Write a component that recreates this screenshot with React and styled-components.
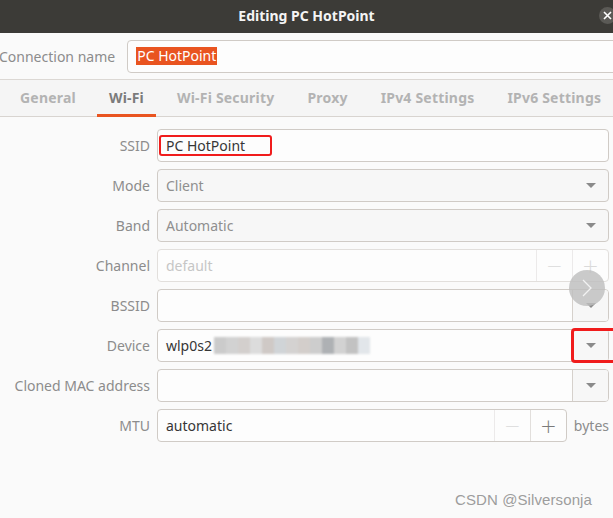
import React from 'react';
import styled, { createGlobalStyle, css } from 'styled-components';

const GlobalStyle = createGlobalStyle`
  html, body {
    margin: 0;
    padding: 0;
    background: #fafafa;
  }
  body {
    font-family: 'Noto Sans', 'Open Sans', sans-serif;
    font-size: 14px;
  }
`;

const Window = styled.div`
  position: relative;
  width: 613px;
  height: 518px;
  overflow: hidden;
  display: flex;
  flex-direction: column;
  background: #fafafa;
`;

const TitleBar = styled.div`
  height: 33px;
  flex-shrink: 0;
  background: #3c3b37;
  display: grid;
  grid-template-columns: 1fr auto 1fr;
  align-items: center;
`;

const Title = styled.div`
  grid-column: 2;
  color: #f4f4f4;
  font-weight: 700;
  font-size: 14px;
  margin-top: -2px;
`;

const CloseButton = styled.div`
  justify-self: end;
  margin-right: -3px;
  margin-top: -2px;
  width: 17px;
  height: 17px;
  border-radius: 50%;
  background: #5b5a56;
  display: flex;
  align-items: center;
  justify-content: center;
`;

const NameRow = styled.div`
  height: 46px;
  flex-shrink: 0;
  display: flex;
  align-items: center;
  gap: 12px;
  border-bottom: 1px solid #dcd8d4;
`;

const NameLabel = styled.div`
  color: #8c8c8c;
  margin-left: -1px;
  white-space: nowrap;
`;

const NameEntry = styled.div`
  flex: 1;
  height: 33px;
  margin-right: -12px;
  box-sizing: border-box;
  border: 1px solid #d0cbc6;
  border-radius: 4px;
  background: #fdfdfd;
  display: flex;
  align-items: center;
  padding-left: 8px;
`;

const Selected = styled.span`
  background: #e95420;
  color: #ffffff;
  line-height: 18px;
  padding: 0 1px;
`;

const TabBar = styled.div`
  height: 36px;
  flex-shrink: 0;
  display: flex;
  align-items: stretch;
  gap: 9px;
  padding-left: 8px;
  background: #f5f5f5;
  border-bottom: 1px solid #d8d4d0;
`;

const Tab = styled.div`
  padding: 0 12px;
  display: flex;
  align-items: center;
  font-weight: 700;
  font-size: 14px;
  letter-spacing: 0.2px;
  white-space: nowrap;
  color: #b3b3b3;
  margin-bottom: -1px;
  border-bottom: 3px solid transparent;
  padding-top: 1px;
  ${(p) =>
    p.$active &&
    css`
      color: #7b7b7b;
      border-bottom-color: #e95420;
    `}
`;

const Form = styled.div`
  display: grid;
  grid-template-columns: 150px 1fr;
  column-gap: 7px;
  row-gap: 7px;
  padding: 12px 4px 0 0;
`;

const FieldLabel = styled.div`
  color: #8c8c8c;
  text-align: right;
  align-self: center;
  white-space: nowrap;
`;

const FieldLine = styled.div`
  display: flex;
  align-items: center;
  gap: 7px;
`;

const Field = styled.div`
  flex: 1;
  height: 33px;
  box-sizing: border-box;
  border: 1px solid #d0cbc6;
  border-radius: 4px;
  background: ${(p) => (p.$combo ? '#f7f7f7' : '#fdfdfd')};
  display: flex;
  align-items: stretch;
  ${(p) =>
    p.$disabled &&
    css`
      border-color: #e2dfdc;
    `}
`;

const FieldText = styled.div`
  flex: 1;
  display: flex;
  align-items: center;
  padding-left: 8px;
  color: ${(p) => (p.$muted ? '#8f8f8f' : p.$placeholder ? '#c6c6c6' : '#363636')};
  white-space: nowrap;
  overflow: hidden;
`;

const Marked = styled.span`
  border: 2px solid #f01c1c;
  border-radius: 3px;
  margin-left: -7px;
  padding: 0 25px 0 5px;
  line-height: 17px;
`;

const SideButton = styled.div`
  position: relative;
  width: 35px;
  flex-shrink: 0;
  display: flex;
  align-items: center;
  justify-content: center;
  border-left: 1px solid ${(p) => (p.$plain ? 'transparent' : '#d6d1cc')};
  background: ${(p) => (p.$plain ? 'transparent' : '#f7f7f7')};
  border-radius: 0 3px 3px 0;
`;

const Arrow = styled.div`
  width: 0;
  height: 0;
  border-left: 5px solid transparent;
  border-right: 5px solid transparent;
  border-top: 5px solid #8a8a8a;
`;

const SpinButton = styled.div`
  width: 35px;
  flex-shrink: 0;
  display: flex;
  align-items: center;
  justify-content: center;
  border-left: 1px solid ${(p) => (p.$faded ? '#eceaea' : '#e2dfdc')};
  color: ${(p) => (p.$faded ? '#dadada' : '#7a7a7a')};
  font-size: 20px;
  font-weight: 300;
  font-family: 'DejaVu Sans', sans-serif;
`;

const Unit = styled.div`
  color: #8c8c8c;
`;

const Pixelated = styled.div`
  display: flex;
  height: 17px;
  margin-left: 2px;
  filter: blur(0.8px);
`;

const Pixel = styled.span`
  width: 12px;
  height: 100%;
`;

const RedFrame = styled.div`
  position: absolute;
  left: -2px;
  top: -2px;
  right: -9px;
  bottom: -2px;
  border: 3px solid #f01c1c;
  border-radius: 4px;
  pointer-events: none;
`;

const ScrollHint = styled.div`
  position: absolute;
  left: 569px;
  top: 270px;
  width: 36px;
  height: 36px;
  border-radius: 50%;
  background: rgba(190, 190, 190, 0.82);
  display: flex;
  align-items: center;
  justify-content: center;
`;

const Watermark = styled.div`
  position: absolute;
  left: 455px;
  top: 491px;
  font-family: 'Liberation Sans', Arial, sans-serif;
  font-size: 15px;
  color: #9d9d9d;
  letter-spacing: 0.1px;
`;

const blurColors = [
  '#cbcbcb', '#d2d2d2', '#d3cfcd', '#dcdcdc', '#cfc9c6', '#d0d4d7',
  '#d4d2d1', '#d3cecb', '#cdcdcd', '#aeb1b4', '#d2d2d2', '#c2c2c2', '#e2e6ea',
];

const tabs = ['General', 'Wi-Fi', 'Wi-Fi Security', 'Proxy', 'IPv4 Settings', 'IPv6 Settings'];

const DropDown = ({ plain, children }) => (
  <SideButton $plain={plain}>
    <Arrow />
    {children}
  </SideButton>
);

const App = () => {
  return (
    <Window>
      <GlobalStyle />
      <TitleBar>
        <Title>Editing PC HotPoint</Title>
        <CloseButton>
          <svg width="9" height="9" viewBox="0 0 9 9">
            <path d="M1 1 L8 8 M8 1 L1 8" stroke="#ffffff" strokeWidth="1.6" />
          </svg>
        </CloseButton>
      </TitleBar>

      <NameRow>
        <NameLabel>Connection name</NameLabel>
        <NameEntry>
          <Selected>PC HotPoint</Selected>
        </NameEntry>
      </NameRow>

      <TabBar>
        {tabs.map((t) => (
          <Tab key={t} $active={t === 'Wi-Fi'}>
            {t}
          </Tab>
        ))}
      </TabBar>

      <Form>
        <FieldLabel>SSID</FieldLabel>
        <Field>
          <FieldText>
            <Marked>PC HotPoint</Marked>
          </FieldText>
        </Field>

        <FieldLabel>Mode</FieldLabel>
        <Field $combo>
          <FieldText $muted>Client</FieldText>
          <DropDown plain />
        </Field>

        <FieldLabel>Band</FieldLabel>
        <Field $combo>
          <FieldText $muted>Automatic</FieldText>
          <DropDown plain />
        </Field>

        <FieldLabel>Channel</FieldLabel>
        <Field $disabled>
          <FieldText $placeholder>default</FieldText>
          <SpinButton $faded>−</SpinButton>
          <SpinButton $faded>+</SpinButton>
        </Field>

        <FieldLabel>BSSID</FieldLabel>
        <Field>
          <FieldText />
          <DropDown />
        </Field>

        <FieldLabel>Device</FieldLabel>
        <Field>
          <FieldText>
            wlp0s2
            <Pixelated>
              {blurColors.map((c, i) => (
                <Pixel key={i} style={{ background: c }} />
              ))}
            </Pixelated>
          </FieldText>
          <DropDown>
            <RedFrame />
          </DropDown>
        </Field>

        <FieldLabel>Cloned MAC address</FieldLabel>
        <Field>
          <FieldText />
          <DropDown />
        </Field>

        <FieldLabel>MTU</FieldLabel>
        <FieldLine>
          <Field>
            <FieldText>automatic</FieldText>
            <SpinButton $faded>−</SpinButton>
            <SpinButton>+</SpinButton>
          </Field>
          <Unit>bytes</Unit>
        </FieldLine>
      </Form>

      <ScrollHint>
        <svg width="14" height="20" viewBox="0 0 14 20">
          <path d="M3 2 L11 10 L3 18" fill="none" stroke="#f2f2f2" strokeWidth="1.3" />
        </svg>
      </ScrollHint>

      <Watermark>CSDN @Silversonja</Watermark>
    </Window>
  );
};

export default App;
